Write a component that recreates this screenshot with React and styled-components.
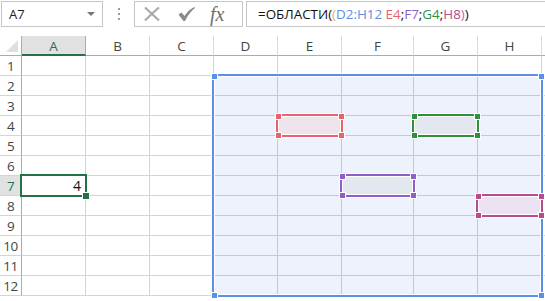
import React from 'react'
import styled, { createGlobalStyle } from 'styled-components'

const GlobalStyle = createGlobalStyle`
  html, body {
    margin: 0;
    padding: 0;
    background: #ffffff;
  }
  body {
    font-family: 'Open Sans', 'Noto Sans', sans-serif;
    overflow: hidden;
  }
`

// column widths include the 1px right grid line
const COLUMNS = [
  { id: 'A', w: 64 },
  { id: 'B', w: 64 },
  { id: 'C', w: 64 },
  { id: 'D', w: 64 },
  { id: 'E', w: 64 },
  { id: 'F', w: 72 },
  { id: 'G', w: 64 },
  { id: 'H', w: 64 }
]
const ROW_HEAD_W = 22
const HEAD_H = 20
const ROW_H = 20
const ROWS = 12

const BIG = { c1: 3, c2: 7, r1: 2, r2: 12, color: '#5b8fe8', fill: '#eef2fc' }
const RANGES = [
  { c1: 4, c2: 4, r1: 4, r2: 4, color: '#e8636b', fill: '#efe4ec' },
  { c1: 6, c2: 6, r1: 4, r2: 4, color: '#2f8f3b', fill: '#e3e8f0' },
  { c1: 5, c2: 5, r1: 7, r2: 7, color: '#8e5fc6', fill: '#e3e8f0' },
  { c1: 7, c2: 7, r1: 8, r2: 8, color: '#b84a8d', fill: '#ece2f1' }
]

const ACTIVE = { c: 0, r: 7 }

// x of vertical grid line before column i (relative to grid)
const lineX = i => ROW_HEAD_W - 1 + COLUMNS.slice(0, i).reduce((s, c) => s + c.w, 0)
const lineY = r => HEAD_H - 1 + (r - 1) * ROW_H

const inRange = (rg, c, r) => c >= rg.c1 && c <= rg.c2 && r >= rg.r1 && r <= rg.r2

const Page = styled.div`
  width: 545px;
  height: 301px;
  overflow: hidden;
  background: #ffffff;
`

const Toolbar = styled.div`
  display: flex;
  align-items: center;
  height: 26px;
  padding: 1px 0 0 1px;
  margin-bottom: 9px;
`

const NameBox = styled.div`
  display: flex;
  align-items: center;
  justify-content: space-between;
  box-sizing: border-box;
  width: 102px;
  height: 26px;
  border: 1px solid #c6c6c6;
  padding: 0 7px 0 7px;
  font-size: 13px;
  color: #222;
`

const DropArrow = styled.span`
  width: 0;
  height: 0;
  border-left: 4px solid transparent;
  border-right: 4px solid transparent;
  border-top: 4px solid #777;
`

const Grip = styled.div`
  width: 31px;
  display: flex;
  flex-direction: column;
  align-items: center;
  gap: 3px;
  span {
    width: 2px;
    height: 2px;
    background: #9a9a9a;
  }
`

const ButtonBox = styled.div`
  display: flex;
  align-items: center;
  box-sizing: border-box;
  width: 109px;
  height: 26px;
  border: 1px solid #c6c6c6;
  padding: 0 0 0 8px;
  gap: 16px;
`

const Fx = styled.span`
  font-family: 'Liberation Serif', 'DejaVu Serif', serif;
  font-style: italic;
  font-size: 20px;
  color: #6f6f6f;
  line-height: 1;
  margin-left: -2px;
`

const FormulaBox = styled.div`
  flex: 1;
  display: flex;
  align-items: center;
  box-sizing: border-box;
  height: 26px;
  margin-left: 3px;
  border: 1px solid #c6c6c6;
  border-right: none;
  padding-left: 11px;
  font-size: 13.4px;
  color: #111;
  white-space: pre;
`

const Ref = styled.span`
  color: ${p => p.$color};
`

const Sheet = styled.div`
  position: relative;
  display: grid;
  grid-template-columns: ${ROW_HEAD_W}px ${COLUMNS.map(c => c.w + 'px').join(' ')} 1fr;
  grid-template-rows: ${HEAD_H}px repeat(${ROWS}, ${ROW_H}px) 1fr;
`

const Corner = styled.div`
  position: relative;
  box-sizing: border-box;
  border-right: 1px solid #ababab;
  border-bottom: 1px solid #ababab;
  &::after {
    content: '';
    position: absolute;
    right: 3px;
    bottom: 3px;
    width: 0;
    height: 0;
    border-left: 12px solid transparent;
    border-bottom: 12px solid #dfdfdf;
  }
`

const ColHead = styled.div`
  box-sizing: border-box;
  display: flex;
  align-items: center;
  justify-content: center;
  font-size: 13.5px;
  color: ${p => (p.$active ? '#217346' : '#444')};
  background: ${p => (p.$active ? '#e1e1e1' : '#ffffff')};
  border-right: 1px solid ${p => (p.$active ? '#ababab' : '#dadada')};
  border-bottom: ${p => (p.$active ? '2px solid #217346' : '1px solid #ababab')};
  padding-top: ${p => (p.$active ? '1px' : '0')};
`

const RowHead = styled.div`
  box-sizing: border-box;
  display: flex;
  align-items: center;
  justify-content: center;
  font-size: 13.5px;
  letter-spacing: -0.5px;
  color: ${p => (p.$active ? '#217346' : '#444')};
  background: ${p => (p.$active ? '#e1e1e1' : '#ffffff')};
  border-right: 1px solid ${p => (p.$active ? '#217346' : '#ababab')};
  border-bottom: 1px solid #d4d4d4;
`

const Cell = styled.div`
  box-sizing: border-box;
  display: flex;
  align-items: center;
  justify-content: flex-end;
  padding-right: 4px;
  font-size: 14px;
  color: #111;
  background: ${p => p.$fill || '#ffffff'};
  border-right: 1px solid ${p => (p.$shaded ? '#c6c7d0' : '#d4d4d4')};
  border-bottom: 1px solid ${p => (p.$shaded ? '#c6c7d0' : '#d4d4d4')};
`

const RangeFrame = styled.div`
  position: absolute;
  box-sizing: border-box;
  border: 2px solid ${p => p.$color};
  box-shadow: 0 0 0 1px #ffffff, inset 0 0 0 1px #ffffff;
  pointer-events: none;
`

const Handle = styled.span`
  position: absolute;
  box-sizing: border-box;
  width: 7px;
  height: 7px;
  background: ${p => p.$color};
  border: 1px solid #ffffff;
`

const ActiveFrame = styled.div`
  position: absolute;
  box-sizing: border-box;
  border: 2px solid #217346;
`

const FillHandle = styled.span`
  position: absolute;
  right: -5px;
  bottom: -5px;
  width: 6px;
  height: 6px;
  background: #217346;
  border: 1px solid #ffffff;
`

const CloseIcon = () => (
  <svg width="18" height="16" viewBox="0 0 18 16">
    <path d="M2 1.5 C6 5 10 9 16 14.5 M16 1.5 C11 5.5 7 9.5 2 14.5" stroke="#a8a8a8" strokeWidth="2.2" fill="none" />
  </svg>
)

const CheckIcon = () => (
  <svg width="19" height="16" viewBox="0 0 19 16">
    <path d="M1.5 8.5 L4.5 6.5 L7.5 10 C10 6 13 3 17.5 1 L18 2 C14 5 11 9 8 15 L6.5 15 Z" fill="#8a8a8a" />
  </svg>
)

const Range = ({ rg, handles = true }) => {
  const left = lineX(rg.c1) - 1
  const top = lineY(rg.r1) - 1
  const width = lineX(rg.c2 + 1) - lineX(rg.c1) + 3
  const height = lineY(rg.r2 + 1) - lineY(rg.r1) + 3
  const corners = [
    { left: -3, top: -3 },
    { right: -4, top: -3 },
    { left: -3, bottom: -4 },
    { right: -4, bottom: -4 }
  ]
  return (
    <RangeFrame $color={rg.color} style={{ left, top, width, height }}>
      {handles && corners.map((s, i) => <Handle key={i} $color={rg.color} style={s} />)}
    </RangeFrame>
  )
}

const cellFill = (c, r) => {
  const small = RANGES.find(rg => inRange(rg, c, r))
  if (small) return small.fill
  if (inRange(BIG, c, r)) return BIG.fill
  return null
}

const App = () => {
  const rows = Array.from({ length: ROWS }, (_, i) => i + 1)
  return (
    <Page>
      <GlobalStyle />
      <Toolbar>
        <NameBox>
          A7
          <DropArrow />
        </NameBox>
        <Grip>
          <span />
          <span />
          <span />
        </Grip>
        <ButtonBox>
          <CloseIcon />
          <CheckIcon />
          <Fx>fx</Fx>
        </ButtonBox>
        <FormulaBox>
          <span>=ОБЛАСТИ(</span>
          <Ref $color="#f2a57a">(</Ref>
          <Ref $color="#5b8fe8">D2:H12</Ref>
          <span>{' '}</span>
          <Ref $color="#e8636b">E4</Ref>
          <span>;</span>
          <Ref $color="#8e5fc6">F7</Ref>
          <span>;</span>
          <Ref $color="#2f8f3b">G4</Ref>
          <span>;</span>
          <Ref $color="#b84a8d">H8</Ref>
          <Ref $color="#d05f9a">)</Ref>
          <span>)</span>
        </FormulaBox>
      </Toolbar>

      <Sheet>
        <Corner />
        {COLUMNS.map((col, i) => (
          <ColHead key={col.id} $active={i === ACTIVE.c}>{col.id}</ColHead>
        ))}
        <ColHead />
        {rows.map(r => (
          <React.Fragment key={r}>
            <RowHead $active={r === ACTIVE.r}>{r}</RowHead>
            {COLUMNS.map((col, c) => {
              const fill = cellFill(c, r)
              return (
                <Cell key={col.id} $fill={fill} $shaded={!!fill}>
                  {c === ACTIVE.c && r === ACTIVE.r ? '4' : ''}
                </Cell>
              )
            })}
            <Cell />
          </React.Fragment>
        ))}

        <Range rg={BIG} />
        {RANGES.map((rg, i) => <Range key={i} rg={rg} />)}
        <ActiveFrame
          style={{
            left: lineX(ACTIVE.c) - 1,
            top: lineY(ACTIVE.r) - 1,
            width: lineX(ACTIVE.c + 1) - lineX(ACTIVE.c) + 3,
            height: ROW_H + 3
          }}
        >
          <FillHandle />
        </ActiveFrame>
      </Sheet>
    </Page>
  )
}

export default App
